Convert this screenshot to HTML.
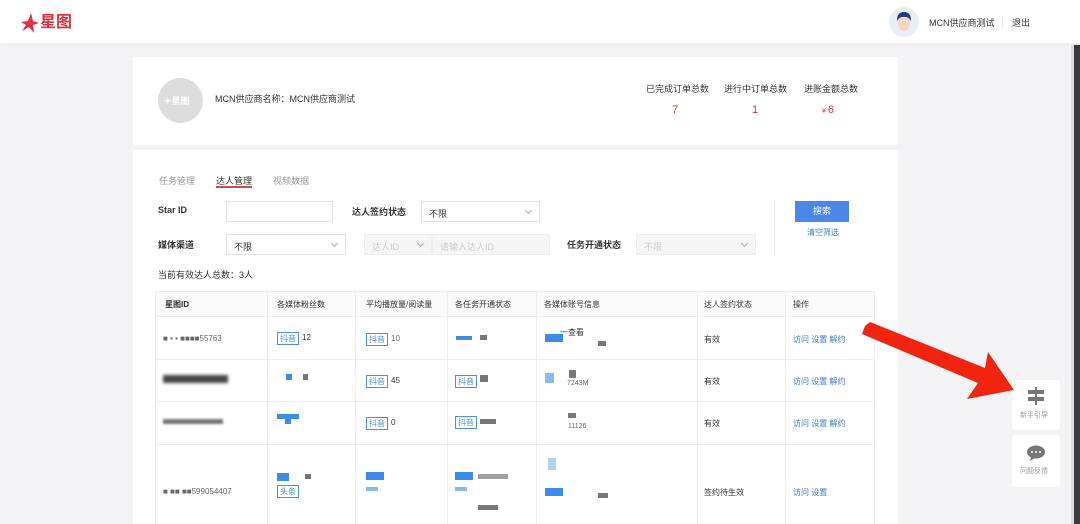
<!DOCTYPE html>
<html><head><meta charset="utf-8"><style>
*{margin:0;padding:0;box-sizing:border-box}
body{width:1080px;height:524px;overflow:hidden;background:#f3f3f5;font-family:"Liberation Sans","Noto Sans CJK SC",sans-serif;font-size:9px;color:#333;position:relative}
.a{position:absolute}
.hdr{left:0;top:0;width:1080px;height:43px;background:#fff;box-shadow:0 2px 4px rgba(0,0,0,.03)}
.card{background:#fff}
.inp{border:1px solid #e3e3e3;background:#fff;height:21px}
.dis{background:#f5f5f5;border:1px solid #eee;color:#ccc}
.chev{position:absolute;right:8px;top:6px;width:5px;height:5px;border-right:1px solid #aaa;border-bottom:1px solid #aaa;transform:rotate(45deg)}
.th{background:#fafafa;border-bottom:1px solid #eee}
.vl{width:1px;background:#eee}
.hl{height:1px;background:#eee}
.tag{border:1px solid #4a8fe0;color:#4a8fe0;padding:0 2px;font-size:8px;line-height:11px}
.g{background:#777}
.b{background:#3b8bea}
.lk{color:#3b7bd0}
</style></head><body>
<div class="a hdr"></div>
<svg class="a" style="left:18px;top:9px" width="64" height="26"><polygon points="3,13 10,12 13,4 15,12 21,14 15,16 16,24 11,18 4,22 8,16" fill="#e0323c"/><text x="22" y="18" font-size="16" font-weight="bold" fill="#e0323c" font-family="Noto Sans CJK SC">星图</text></svg>
<svg class="a" style="left:888px;top:7px" width="32" height="30"><circle cx="16" cy="15" r="15" fill="#e8eef3"/><ellipse cx="16" cy="16" rx="6" ry="8" fill="#f5d6c0"/><path d="M9 14 Q9 5 16 5 Q23 5 23 14 Q20 9 16 10 Q12 9 9 14Z" fill="#1f3a78"/></svg>
<div class="a" style="left:929px;top:16px;font-size:9px;color:#333">MCN供应商测试</div>
<div class="a" style="left:1002px;top:16px;width:1px;height:12px;background:#e5e5e5"></div>
<div class="a" style="left:1012px;top:16px;font-size:9px">退出</div>
<div class="a" style="left:1073px;top:45px;width:7px;height:479px;background:#3b3b3e"></div>
<div class="a" style="left:1071px;top:45px;width:3px;height:479px;background:#ddd"></div>

<div class="a card" style="left:133px;top:57px;width:765px;height:88px"></div>
<div class="a" style="left:158px;top:78px;width:45px;height:45px;border-radius:50%;background:#ddd"></div>
<div class="a" style="left:164px;top:94px;color:#fff;font-size:9px;font-weight:bold">✦星图</div>
<div class="a" style="left:215px;top:92px;font-size:9px">MCN供应商名称：MCN供应商测试</div>
<div class="a" style="left:646px;top:82px;font-size:9px">已完成订单总数</div>
<div class="a" style="left:724px;top:82px;font-size:9px">进行中订单总数</div>
<div class="a" style="left:804px;top:82px;font-size:9px">进账金额总数</div>
<div class="a" style="left:672px;top:104px;font-size:11px;color:#d33">7</div>
<div class="a" style="left:752px;top:104px;font-size:11px;color:#d33">1</div>
<div class="a" style="left:822px;top:104px;font-size:11px;color:#d33"><span style="font-size:7px">¥ </span>6</div>

<div class="a card" style="left:133px;top:150px;width:765px;height:374px"></div>
<div class="a" style="left:159px;top:174px;color:#999">任务管理</div>
<div class="a" style="left:216px;top:174px;color:#333">达人管理</div>
<div class="a" style="left:216px;top:186px;width:36px;height:2px;background:#d9454f"></div>
<div class="a" style="left:273px;top:174px;color:#999">视频数据</div>
<div class="a" style="left:158px;top:205px;font-weight:bold">Star ID</div>
<div class="a inp" style="left:226px;top:201px;width:107px"></div>
<div class="a" style="left:352px;top:205px;font-weight:bold">达人签约状态</div>
<div class="a inp" style="left:421px;top:201px;width:119px"><span style="position:absolute;left:7px;top:5px">不限</span><i class="chev"></i></div>
<div class="a" style="left:158px;top:238px;font-weight:bold">媒体渠道</div>
<div class="a inp" style="left:226px;top:234px;width:120px"><span style="position:absolute;left:7px;top:5px">不限</span><i class="chev"></i></div>
<div class="a inp dis" style="left:364px;top:234px;width:68px"><span style="position:absolute;left:7px;top:5px">达人ID</span><i class="chev"></i></div>
<div class="a inp dis" style="left:432px;top:234px;width:118px"><span style="position:absolute;left:7px;top:5px">请输入达人ID</span></div>
<div class="a" style="left:567px;top:238px;font-weight:bold">任务开通状态</div>
<div class="a inp dis" style="left:636px;top:234px;width:120px"><span style="position:absolute;left:7px;top:5px">不限</span><i class="chev"></i></div>
<div class="a" style="left:774px;top:200px;width:1px;height:55px;background:#eee"></div>
<div class="a" style="left:795px;top:201px;width:54px;height:21px;background:#4b86e8;color:#fff;text-align:center;line-height:21px">搜索</div>
<div class="a lk" style="left:807px;top:227px;font-size:8px">清空筛选</div>
<div class="a" style="left:158px;top:268px">当前有效达人总数：3人</div>

<div class="a" style="left:155px;top:291px;width:720px;height:233px;border:1px solid #eee;border-bottom:none"></div>
<div class="a th" style="left:156px;top:292px;width:718px;height:25px"></div>
<div class="a hl" style="left:156px;top:359px;width:718px"></div>
<div class="a hl" style="left:156px;top:401px;width:718px"></div>
<div class="a hl" style="left:156px;top:444px;width:718px"></div>
<div class="a vl" style="left:267px;top:292px;height:232px"></div>
<div class="a vl" style="left:355px;top:292px;height:232px"></div>
<div class="a vl" style="left:447px;top:292px;height:232px"></div>
<div class="a vl" style="left:536px;top:292px;height:232px"></div>
<div class="a vl" style="left:697px;top:292px;height:232px"></div>
<div class="a vl" style="left:785px;top:292px;height:232px"></div>
<div class="a" style="left:165px;top:299px;font-size:8px;font-weight:bold">星图ID</div>
<div class="a" style="left:277px;top:299px;font-size:8px">各媒体粉丝数</div>
<div class="a" style="left:366px;top:299px;font-size:8px">平均播放量/阅读量</div>
<div class="a" style="left:455px;top:299px;font-size:8px">各任务开通状态</div>
<div class="a" style="left:544px;top:299px;font-size:8px">各媒体账号信息</div>
<div class="a" style="left:704px;top:299px;font-size:8px">达人签约状态</div>
<div class="a" style="left:793px;top:299px;font-size:8px">操作</div>

<div class="a" style="left:163px;top:334px;font-size:8px;color:#666">■ ▪ ▪ ■■■■55763</div>
<div class="a tag" style="left:277px;top:332px">抖音</div><div class="a" style="left:302px;top:333px;font-size:8px">12</div>
<div class="a tag" style="left:366px;top:333px">抖音</div><div class="a" style="left:391px;top:334px;font-size:8px;color:#666">10</div>
<div class="a b" style="left:456px;top:336px;width:16px;height:4px"></div><div class="a g" style="left:480px;top:335px;width:7px;height:5px"></div>
<div class="a b" style="left:545px;top:334px;width:18px;height:8px"></div><div class="a" style="left:560px;top:327px;font-size:8px">一查看</div><div class="a g" style="left:598px;top:341px;width:8px;height:5px"></div>
<div class="a" style="left:704px;top:334px;font-size:8px">有效</div>
<div class="a lk" style="left:793px;top:334px;font-size:8px">访问 设置 解约</div>

<div class="a" style="left:163px;top:375px;width:65px;height:8px;background:#444;filter:blur(1.5px)"></div>
<div class="a b" style="left:286px;top:374px;width:6px;height:6px"></div><div class="a g" style="left:303px;top:374px;width:5px;height:6px"></div>
<div class="a tag" style="left:366px;top:375px">抖音</div><div class="a" style="left:391px;top:376px;font-size:8px">45</div>
<div class="a tag" style="left:455px;top:375px">抖音</div><div class="a g" style="left:480px;top:375px;width:8px;height:7px"></div>
<div class="a b" style="left:545px;top:373px;width:9px;height:10px;opacity:.6"></div><div class="a g" style="left:569px;top:370px;width:7px;height:8px"></div><div class="a" style="left:567px;top:380px;font-size:7px;color:#666">7243M</div>
<div class="a" style="left:704px;top:376px;font-size:8px">有效</div>
<div class="a lk" style="left:793px;top:376px;font-size:8px">访问 设置 解约</div>

<div class="a" style="left:163px;top:419px;width:60px;height:5px;background:#777;filter:blur(1px)"></div>
<div class="a b" style="left:277px;top:414px;width:22px;height:5px"></div><div class="a b" style="left:285px;top:414px;width:6px;height:10px"></div>
<div class="a tag" style="left:366px;top:417px">抖音</div><div class="a" style="left:391px;top:418px;font-size:8px">0</div>
<div class="a tag" style="left:455px;top:416px">抖音</div><div class="a g" style="left:480px;top:419px;width:16px;height:5px"></div>
<div class="a g" style="left:568px;top:413px;width:8px;height:5px"></div><div class="a" style="left:568px;top:423px;font-size:7px;color:#666">11126</div>
<div class="a" style="left:704px;top:418px;font-size:8px">有效</div>
<div class="a lk" style="left:793px;top:418px;font-size:8px">访问 设置 解约</div>

<div class="a" style="left:163px;top:487px;font-size:8px;color:#666">■ ■■ ■■599054407</div>
<div class="a b" style="left:277px;top:473px;width:12px;height:8px"></div><div class="a tag" style="left:277px;top:485px">头条</div><div class="a g" style="left:305px;top:474px;width:6px;height:5px"></div>
<div class="a b" style="left:366px;top:472px;width:18px;height:8px"></div><div class="a b" style="left:366px;top:487px;width:12px;height:4px;opacity:.6"></div>
<div class="a b" style="left:455px;top:472px;width:18px;height:8px"></div><div class="a b" style="left:455px;top:487px;width:12px;height:4px;opacity:.6"></div><div class="a g" style="left:478px;top:474px;width:30px;height:5px;opacity:.7"></div><div class="a g" style="left:478px;top:505px;width:20px;height:5px"></div>
<div class="a b" style="left:548px;top:458px;width:8px;height:12px;opacity:.4"></div><div class="a b" style="left:545px;top:488px;width:18px;height:8px"></div><div class="a g" style="left:598px;top:493px;width:10px;height:5px"></div>
<div class="a" style="left:704px;top:487px;font-size:8px">签约待生效</div>
<div class="a lk" style="left:793px;top:487px;font-size:8px">访问 设置</div>

<div class="a card" style="left:1012px;top:380px;width:48px;height:50px;border-radius:3px"></div>
<svg class="a" style="left:1026px;top:387px" width="20" height="18"><rect x="9" y="0" width="2" height="18" fill="#777"/><rect x="2" y="3" width="16" height="4" fill="#777"/><rect x="2" y="10" width="16" height="4" fill="#777"/></svg>
<div class="a" style="left:1020px;top:410px;font-size:7px;color:#999">新手引导</div>
<div class="a card" style="left:1012px;top:435px;width:48px;height:52px;border-radius:3px"></div>
<svg class="a" style="left:1026px;top:445px" width="20" height="16"><ellipse cx="10" cy="7" rx="9" ry="6.5" fill="#777"/><path d="M5 12 L4 16 L9 13Z" fill="#777"/><circle cx="6" cy="7" r="1" fill="#fff"/><circle cx="10" cy="7" r="1" fill="#fff"/><circle cx="14" cy="7" r="1" fill="#fff"/></svg>
<div class="a" style="left:1020px;top:466px;font-size:7px;color:#999">问题反馈</div>

<svg class="a" style="left:0;top:0" width="1080" height="524"><polygon points="865,326 870,322 985,368 988,352 1014,390 967,399 978,383 862,334" fill="#f0240f"/></svg>
</body></html>
